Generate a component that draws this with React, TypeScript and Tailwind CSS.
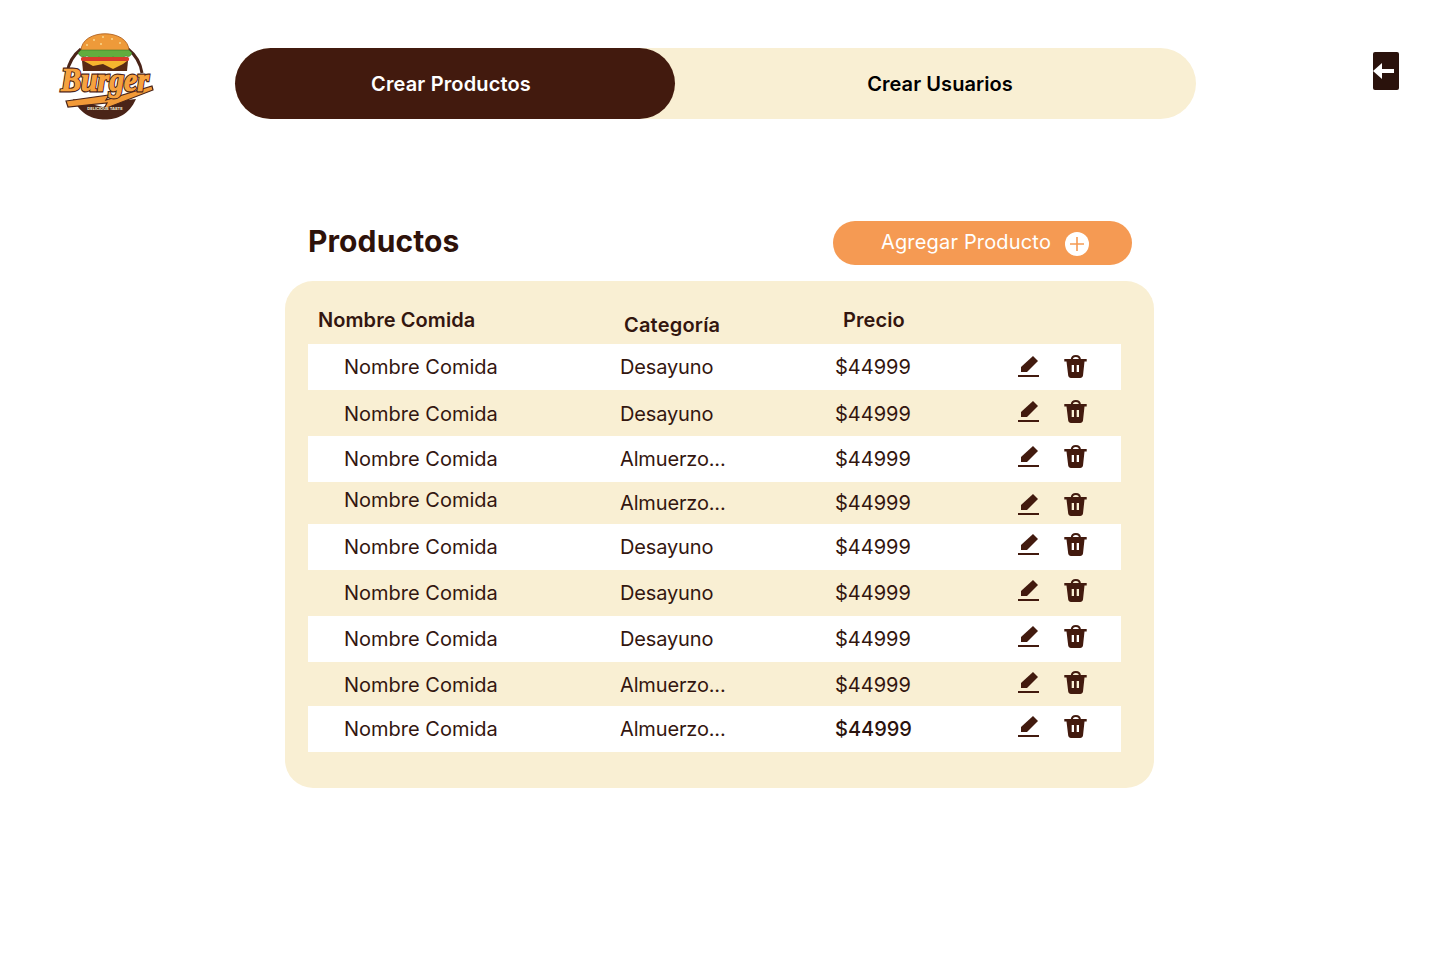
const FONT = "[font-family:Inter,'Liberation_Sans',sans-serif]";

type Row = {
  name: string;
  category: string;
  price: string;
  rowClass: string;
  nameClass: string;
  textClass: string;
  iconClass: string;
  priceClass?: string;
};

const ROWS: Row[] = [
  { name: "Nombre Comida", category: "Desayuno", price: "$44999", rowClass: "h-[46px] bg-white", nameClass: "", textClass: "", iconClass: "" },
  { name: "Nombre Comida", category: "Desayuno", price: "$44999", rowClass: "h-[46px]", nameClass: "mt-[2px]", textClass: "mt-[2px]", iconClass: "mb-[2px]" },
  { name: "Nombre Comida", category: "Almuerzo...", price: "$44999", rowClass: "h-[46px] bg-white", nameClass: "", textClass: "", iconClass: "mb-[4px]" },
  { name: "Nombre Comida", category: "Almuerzo...", price: "$44999", rowClass: "h-[42px]", nameClass: "mb-[6px]", textClass: "", iconClass: "mt-[4px]" },
  { name: "Nombre Comida", category: "Desayuno", price: "$44999", rowClass: "h-[46px] bg-white", nameClass: "", textClass: "", iconClass: "mb-[4px]" },
  { name: "Nombre Comida", category: "Desayuno", price: "$44999", rowClass: "h-[46px]", nameClass: "", textClass: "", iconClass: "mb-[4px]" },
  { name: "Nombre Comida", category: "Desayuno", price: "$44999", rowClass: "h-[46px] bg-white", nameClass: "", textClass: "", iconClass: "mb-[4px]" },
  { name: "Nombre Comida", category: "Almuerzo...", price: "$44999", rowClass: "h-[44px]", nameClass: "mt-[2px]", textClass: "mt-[2px]", iconClass: "mb-[2px]" },
  { name: "Nombre Comida", category: "Almuerzo...", price: "$44999", rowClass: "h-[46px] bg-white", nameClass: "", textClass: "", iconClass: "mb-[4px]", priceClass: "font-[450] text-[#2a120c]" },
];

function PencilIcon() {
  return (
    <svg width="22" height="22" viewBox="0 0 22 22" className="shrink-0">
      <path d="M15 0 L20 5 L9 16 H3 V11 Z" fill="#421a0e" />
      <rect x="0" y="19" width="21" height="2" fill="#421a0e" />
    </svg>
  );
}

function TrashIcon() {
  return (
    <svg width="24" height="24" viewBox="0 0 24 24" className="shrink-0">
      <path d="M7.700 5 C7.900 -0.200 15.800 -0.200 16 5" fill="none" stroke="#421a0e" strokeWidth="2" />
      <path
        fillRule="evenodd"
        d="M0.300 4 H22.700 V6.500 H20.500 L19 20.500 C18.800 22.200 17.600 22.900 16.200 22.900 H7 C5.600 22.900 4.400 22.200 4.200 20.500 L2.500 6.500 H0.300 Z M7.700 10 V17 H10 V10 Z M12.700 10 V17 H15 V10 Z"
        fill="#421a0e"
      />
    </svg>
  );
}

function Logo() {
  return (
    <svg width="98" height="90" viewBox="0 0 98 90" className="shrink-0 overflow-visible">
      {/* aro */}
      <path d="M10 42 A38 38 0 0 1 24 18" fill="none" stroke="#4a2418" strokeWidth="3" />
      <path d="M71 18 A38 38 0 0 1 85 42" fill="none" stroke="#4a2418" strokeWidth="3" />
      <path d="M16 68 C24 84 36 88.500 48 88.500 C60 88.500 72 84 79 68 L60 70 L46 76 L30 72 Z" fill="#4a2418" />
      {/* hamburguesa */}
      <path d="M24 20 C24 -3 72 -3 72 20 Z" fill="#ee9a3a" stroke="#a85a1c" strokeWidth="0.8" />
      <g fill="#f8d68e">
        <circle cx="37" cy="9" r="1" />
        <circle cx="46" cy="6" r="1" />
        <circle cx="55" cy="8" r="1" />
        <circle cx="63" cy="12" r="1" />
        <circle cx="44" cy="13" r="1" />
        <circle cx="30" cy="14" r="1" />
      </g>
      <path d="M21 22 Q24 28 30 25 Q36 29 42 26 Q49 30 56 26 Q63 29 69 25 Q73 27 75 22 L72 19 H24 Z" fill="#62ad3e" stroke="#2f6b22" strokeWidth="0.5" />
      <rect x="24" y="26" width="48" height="4" rx="1.500" fill="#d63c2a" />
      <path d="M25 30 H71 L70 40 H26 Z" fill="#5a2a14" />
      <path d="M27 30 H70 L66 33 L56 38 L46 33 L36 35 Z" fill="#f6b52e" />
      {/* rayo */}
      <path d="M9 70 L52 64 L49 69 L95 55 L96 59 L47 78 L50 72 L11 76 Z" fill="#f29a38" stroke="#4a2418" strokeWidth="1.200" />
      <text
        x="48"
        y="60"
        textAnchor="middle"
        fontFamily="'Liberation Serif', serif"
        fontStyle="italic"
        fontWeight="700"
        fontSize="33"
        textLength="88"
        lengthAdjust="spacingAndGlyphs"
        fill="#f6a23f"
        stroke="#4a2418"
        strokeWidth="3"
        paintOrder="stroke"
      >
        Burger
      </text>
      <text
        x="48"
        y="60"
        textAnchor="middle"
        fontFamily="'Liberation Serif', serif"
        fontStyle="italic"
        fontWeight="700"
        fontSize="33"
        textLength="88"
        lengthAdjust="spacingAndGlyphs"
        fill="#f6a23f"
        stroke="#f6a23f"
        strokeWidth="0.7"
      >
        Burger
      </text>
      <text x="48" y="79" textAnchor="middle" fontFamily="Inter, sans-serif" fontWeight="700" fontSize="4" fill="#f9efd3">
        DELICIOUS TASTE
      </text>
    </svg>
  );
}

export default function App() {
  return (
    <div className={`h-[960px] w-[1440px] bg-white text-[#33160f] ${FONT}`}>
      <header className="flex h-[119px] items-end pl-[57px]">
        <div className="mb-[-2px]">
          <Logo />
        </div>
        <nav className="ml-[80px] flex h-[71px] w-[961px] rounded-full bg-[#f9efd3]">
          <button className="h-full w-[440px] shrink-0 rounded-full bg-[#421a0e] pr-[8px] text-[20px] font-semibold tracking-[0.15px] text-white">
            Crear Productos
          </button>
          <button className="h-full flex-1 pl-[9px] text-[20px] font-semibold tracking-[0.07px] text-black">Crear Usuarios</button>
        </nav>
        <div className="mb-[29px] ml-[177px] flex h-[38px] w-[26px] items-center rounded-[2px] bg-[#2a120c]">
          <svg width="21" height="16" viewBox="0 0 21 16">
            <path d="M0 8 L9 0 V6 H21 V10 H9 V16 Z" fill="#fff" />
          </svg>
        </div>
      </header>

      <main className="ml-[285px] mt-[102px] w-[869px]">
        <div className="flex h-[44px] items-center">
          <h1 className="mb-[4px] ml-[23px] w-[525px] text-[30px] font-bold tracking-[0.1px] text-[#2e120a]">Productos</h1>
          <button className="flex h-[44px] w-[299px] items-center justify-center gap-[14px] rounded-full bg-[#f59a53] pl-[5px] text-[20px] text-white">
            <span className="mb-[2px] tracking-[0.17px]">Agregar Producto</span>
            <span className="mt-[1px] flex h-[24px] w-[24px] items-center justify-center rounded-full bg-white">
              <svg width="14" height="14" viewBox="0 0 14 14">
                <path d="M7 0 V14 M0 7 H14" stroke="#f59a53" strokeWidth="1.6" />
              </svg>
            </span>
          </button>
        </div>

        <section className="mt-[16px] h-[507px] rounded-[28px] bg-[#f9efd3] px-[23px] pt-[24px]">
          <div className="flex h-[39px] text-[20px] font-semibold tracking-[0.08px]">
            <span className="ml-[10px] w-[306px]">Nombre Comida</span>
            <span className="mt-[5px] w-[219px] tracking-[0.2px]">Categoría</span>
            <span>Precio</span>
          </div>
          <div className="w-[813px]">
            {ROWS.map((r, i) => (
              <div key={i} className={`flex items-center text-[20px] ${r.rowClass}`}>
                <span className={`w-[312px] pl-[36px] ${r.nameClass}`}>{r.name}</span>
                <span className={`w-[215px] tracking-[-0.15px] ${r.textClass}`}>{r.category}</span>
                <span className={`w-[183px] ${r.textClass} ${r.priceClass ?? ""}`}>{r.price}</span>
                <div className={`flex items-center gap-[24px] ${r.iconClass}`}>
                  <PencilIcon />
                  <TrashIcon />
                </div>
              </div>
            ))}
          </div>
        </section>
      </main>
    </div>
  );
}
